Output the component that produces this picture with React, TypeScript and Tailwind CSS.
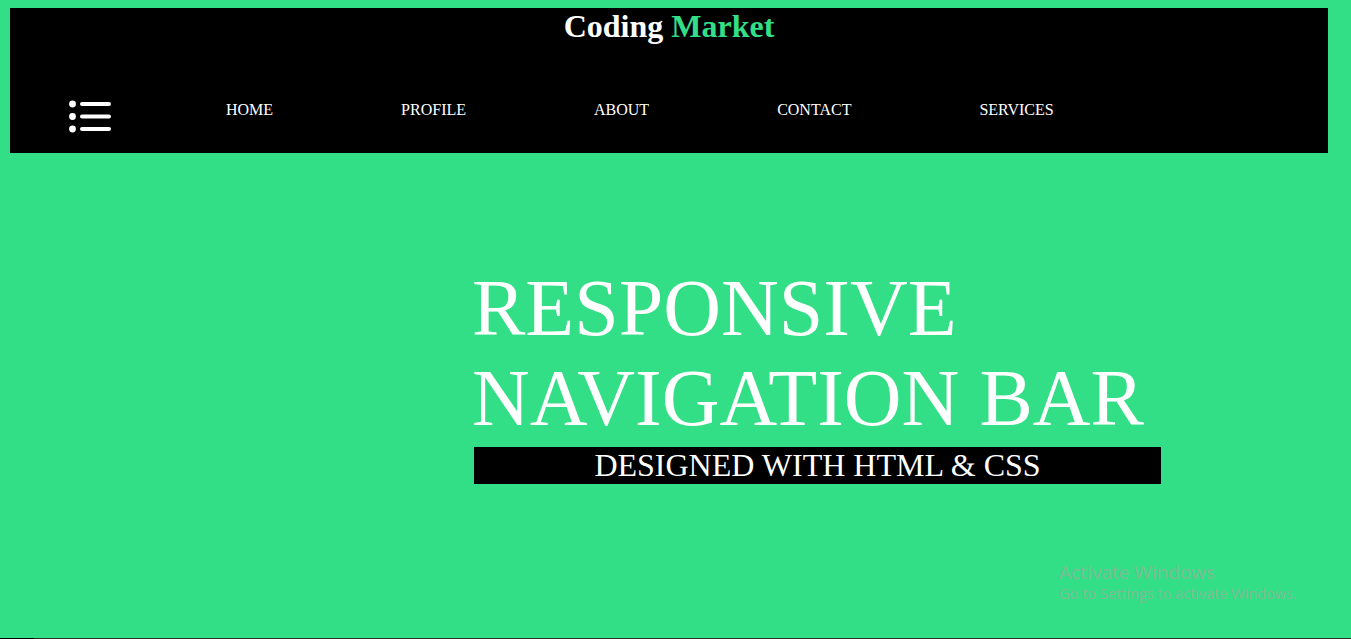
import React from 'react';

const NAV_LINKS = ['HOME', 'PROFILE', 'ABOUT', 'CONTACT', 'SERVICES'];

function MenuIcon() {
  return (
    <svg width="42" height="33" viewBox="0 0 42 33" aria-hidden="true" className="shrink-0">
      {[4, 16.5, 29].map((y) => (
        <g key={y}>
          <circle cx="3.5" cy={y} r="3.4" fill="#fff" />
          <line x1="13" y1={y} x2="40" y2={y} stroke="#fff" strokeWidth="4" strokeLinecap="round" />
        </g>
      ))}
    </svg>
  );
}

export default function App() {
  return (
    <div className="relative h-[639px] overflow-hidden bg-[#33df86] pt-[8px] font-['Liberation_Serif','Times_New_Roman',serif]">
      <header className="ml-[10px] h-[145px] w-[1318px] bg-black">
        <h1 className="pt-[1px] text-center text-[32px] font-bold leading-[34px] text-white">
          Coding <span className="text-[#33df86]">Market</span>
        </h1>
        <nav className="mt-[57px] flex items-start pl-[59px]">
          <MenuIcon />
          <ul className="ml-[115px] mt-[2px] flex gap-[128px] text-[16px] leading-[16px]">
            {NAV_LINKS.map((link) => (
              <li key={link}>
                <a href="#" className="text-white">
                  {link}
                </a>
              </li>
            ))}
          </ul>
        </nav>
      </header>

      <section className="mt-[110px] pl-[472px]">
        <h2 className="text-[80px] font-normal leading-[90px] text-white">
          RESPONSIVE
          <br />
          NAVIGATION BAR
        </h2>
        <p className="ml-[2px] mt-[4px] h-[37px] w-[687px] bg-black text-center text-[32px] leading-[37px] text-white">
          DESIGNED WITH HTML &amp; CSS
        </p>
      </section>

      {/* windows watermark */}
      <div className="absolute left-[1059px] top-[559px] font-['Open_Sans',sans-serif] text-[#7cbb94]">
        <div className="text-[19px] leading-[26px]">Activate Windows</div>
        <div className="text-[14.5px] leading-[18px]">Go to Settings to activate Windows.</div>
      </div>

      <div className="absolute bottom-0 left-0 flex h-[1px] w-full">
        <div className="w-[34px] bg-black" />
        <div className="flex-1 bg-[#2b2b2b]" />
      </div>
    </div>
  );
}
